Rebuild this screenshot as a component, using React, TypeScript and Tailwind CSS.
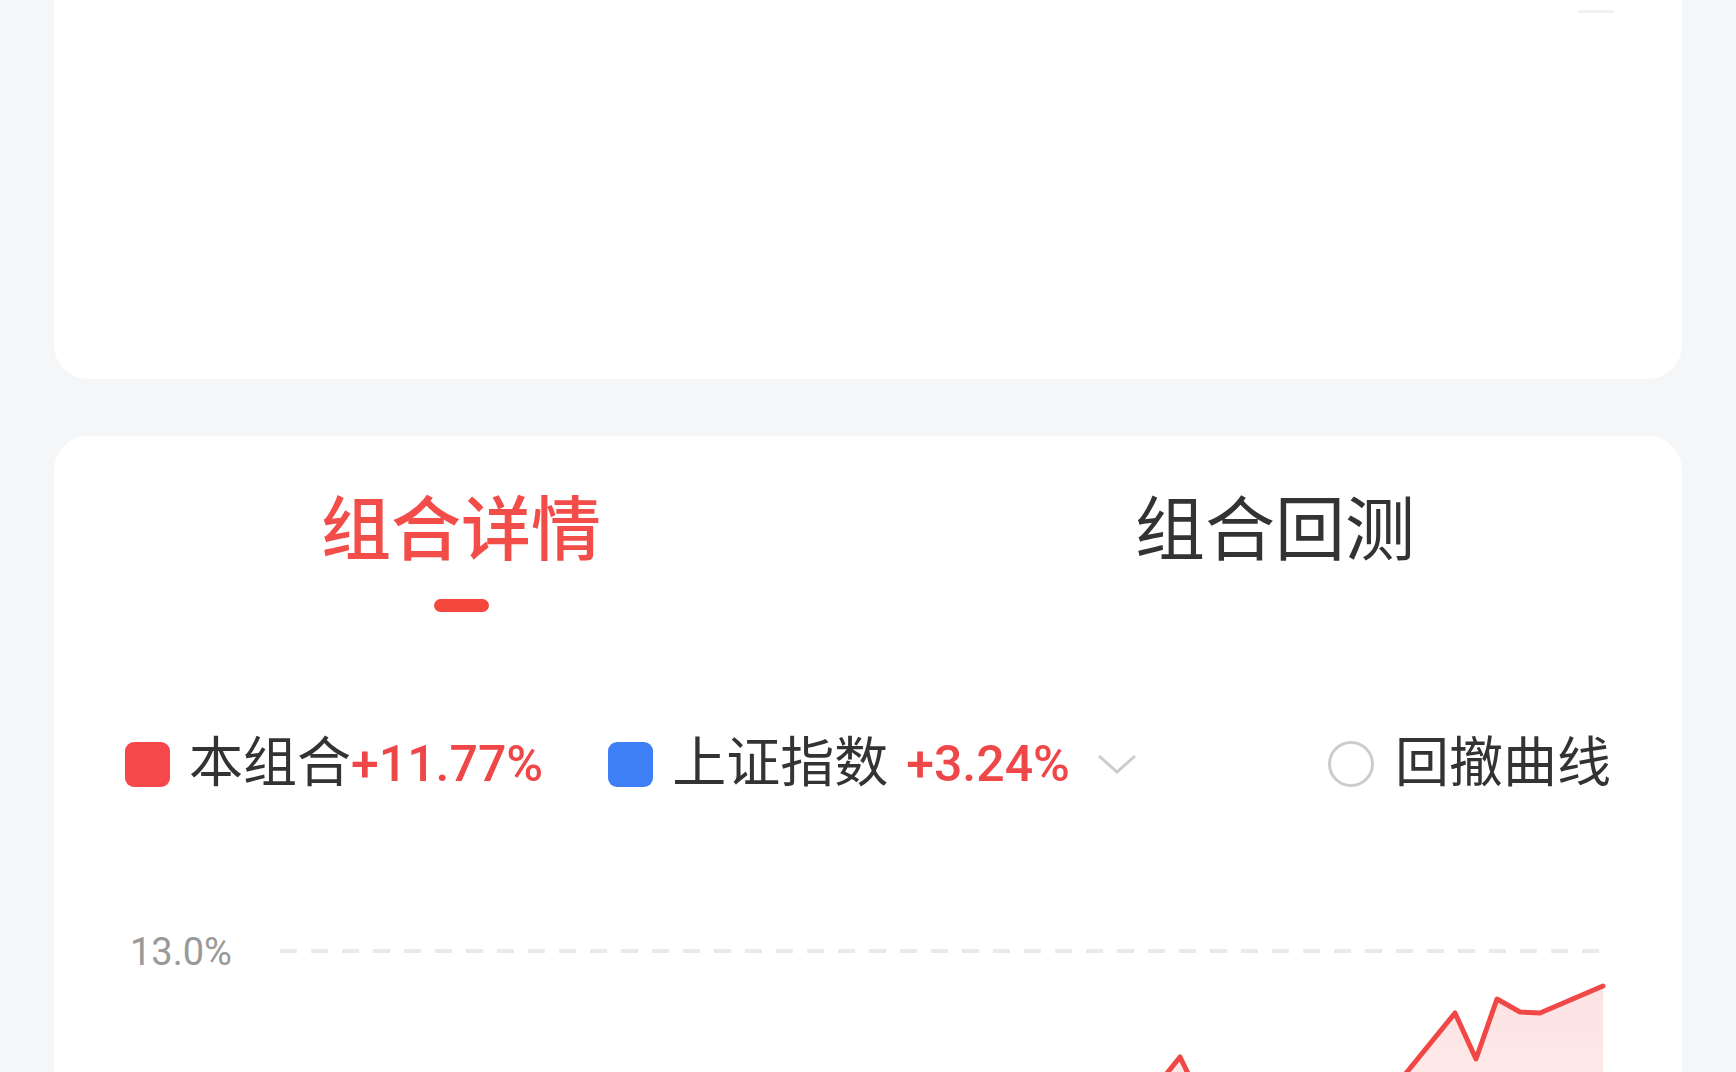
import { useMemo } from "react";

type Point = [number, number];

// cumulative return curve for the portfolio, in chart pixel units
const series: Point[] = [
  [0, 262], [38, 246], [80, 268], [126, 240], [170, 252], [214, 226], [262, 244],
  [310, 218], [352, 236], [398, 206], [440, 228], [486, 200], [532, 222], [578, 196],
  [620, 214], [668, 186], [712, 204], [760, 180], [812, 198], [860, 174], [900, 124],
  [930, 186], [972, 214], [1018, 196], [1060, 212], [1096, 182], [1127, 139], [1175, 80],
  [1196, 126], [1217, 66], [1240, 79], [1260, 80], [1323, 53],
];

const CHART_W = 1327;
const CHART_H = 320;

const LegendSwatch = ({ color }: { color: string }) => (
  <span className={`block w-[45px] h-[45px] rounded-[9px] shrink-0 ${color}`} />
);

const ReturnChart = () => {
  const { line, area } = useMemo(() => {
    const line = series.map(([x, y], i) => `${i === 0 ? "M" : "L"}${x} ${y}`).join(" ");
    const last = series[series.length - 1];
    const area = `${line} L${last[0]} ${CHART_H} L${series[0][0]} ${CHART_H} Z`;
    return { line, area };
  }, []);

  return (
    <svg width={CHART_W} height={CHART_H} viewBox={`0 0 ${CHART_W} ${CHART_H}`} className="block shrink-0">
      <defs>
        <linearGradient id="areaFill" x1="0" y1="0" x2="0" y2="1">
          <stop offset="0%" stopColor="#f24646" stopOpacity="0.16" />
          <stop offset="100%" stopColor="#f24646" stopOpacity="0.04" />
        </linearGradient>
      </defs>
      <line x1="0" y1="18" x2={CHART_W} y2="18" stroke="#e9e9e9" strokeWidth="4" strokeDasharray="17 14" />
      <path d={area} fill="url(#areaFill)" />
      <path d={line} fill="none" stroke="#f04747" strokeWidth="5" strokeLinejoin="round" strokeLinecap="round" />
    </svg>
  );
};

const App = () => {
  return (
    <div
      className="h-[1072px] overflow-hidden bg-[#f5f6f7]"
      style={{ fontFamily: 'Roboto, "Noto Sans CJK SC", sans-serif' }}
    >
      <div className="flex flex-col gap-[57px] px-[54px]">
        {/* summary card, scrolled mostly out of view */}
        <section className="h-[379px] bg-white rounded-b-[34px] flex justify-end items-start pt-[10px] pr-[68px]">
          <div className="w-[36px] h-[3px] rounded-full bg-[#f2f2f2]" />
        </section>

        <section className="bg-white rounded-[34px] h-[900px]">
          {/* tabs */}
          <div className="flex pt-[60px]">
            <div className="flex-1 flex flex-col items-center">
              <span className="text-[70px] leading-none font-medium text-[#f24d49]">组合详情</span>
              <span className="mt-[33px] w-[55px] h-[13px] rounded-full bg-[#f5473b]" />
            </div>
            <div className="flex-1 flex flex-col items-center">
              <span className="text-[70px] leading-none text-[#333333]">组合回测</span>
            </div>
          </div>

          {/* legend */}
          <div className="flex items-center justify-between px-[71px] mt-[125px]">
            <div className="flex items-center">
              <LegendSwatch color="bg-[#f5484a]" />
              <span className="ml-[19px] text-[54px] leading-none text-[#333333]">本组合</span>
              <span className="text-[50px] leading-none font-medium text-[#ef4648]">+11.77%</span>

              <div className="ml-[65px]">
                <LegendSwatch color="bg-[#3f7ff6]" />
              </div>
              <span className="ml-[19px] text-[54px] leading-none text-[#333333]">上证指数</span>
              <span className="ml-[18px] text-[50px] leading-none font-medium text-[#ef4648]">+3.24%</span>
              <svg width="40" height="22" viewBox="0 0 40 22" className="ml-[27px]">
                <polyline points="2,3 20,19 38,3" fill="none" stroke="#cccccc" strokeWidth="3" />
              </svg>
            </div>
            <div className="flex items-center">
              <span className="w-[46px] h-[46px] rounded-full border-[3px] border-[#cccccc]" />
              <span className="ml-[21px] text-[54px] leading-none text-[#333333]">回撤曲线</span>
            </div>
          </div>

          {/* chart */}
          <div className="flex items-start px-[71px] mt-[142px]">
            <span className="w-[155px] pl-[5px] text-[38px] leading-none text-[#999999]">13.0%</span>
            <ReturnChart />
          </div>
        </section>
      </div>
    </div>
  );
};

export default App;
